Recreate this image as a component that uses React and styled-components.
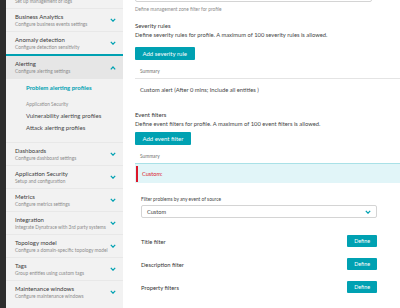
import React from 'react';
import styled, { createGlobalStyle } from 'styled-components';

const GlobalStyle = createGlobalStyle`
    html, body {
        margin: 0;
        padding: 0;
        background: #ffffff;
    }
    body {
        font-family: Lato, "Open Sans", sans-serif;
        color: #454646;
    }
`;

const teal = '#00a1b2';

const Screen = styled.div`
    display: flex;
    width: 400px;
    height: 308px;
    overflow: hidden;
`;

const Rail = styled.div`
    width: 6px;
    flex-shrink: 0;
    background: #2d2d2d;
`;

const Sidebar = styled.nav`
    width: 117px;
    flex-shrink: 0;
    background: #f2f2f2;
    overflow: hidden;
`;

const SideList = styled.div`
    display: flex;
    flex-direction: column;
    margin-top: -15px;
`;

const SideItem = styled.div`
    display: flex;
    align-items: center;
    justify-content: space-between;
    height: ${(p) => (p.active ? 25 : 23)}px;
    box-sizing: border-box;
    padding: 0 7px 0 9px;
    border-top: ${(p) => (p.active ? `2px solid ${teal}` : '1px solid #e8e8e8')};
    background: ${(p) => (p.active ? '#e6e6e6' : 'transparent')};
`;

const SideText = styled.div`
    display: flex;
    flex-direction: column;
`;

const SideTitle = styled.span`
    font-size: 6px;
    line-height: 8px;
    color: #3a3a3a;
`;

const SideSub = styled.span`
    font-size: 4.8px;
    line-height: 7px;
    color: #8c8c8c;
    white-space: nowrap;
`;

const SubMenu = styled.div`
    display: flex;
    flex-direction: column;
    padding: 3px 0 8px 20px;
    border-bottom: 1px solid #7fd0d9;
    margin-bottom: -1px;
`;

const SubLink = styled.span`
    font-size: 6px;
    line-height: 12px;
    font-weight: ${(p) => (p.current ? 700 : 400)};
    color: ${(p) => (p.current ? teal : '#454646')};
`;

const SubLabel = styled.span`
    font-size: 4.8px;
    line-height: 8px;
    color: #8c8c8c;
    margin: 6px 0 2px;
`;

const Chevron = ({ up }) => (
    <svg width="6" height="4" viewBox="0 0 6 4" style={{ flexShrink: 0 }}>
        <path
            d={up ? 'M0.8 3.4 L3 1 L5.2 3.4' : 'M0.8 0.8 L3 3.2 L5.2 0.8'}
            fill="none"
            stroke={teal}
            strokeWidth="1.2"
        />
    </svg>
);

const Main = styled.main`
    flex: 1;
    overflow: hidden;
    padding-left: 12px;
`;

const Content = styled.div`
    display: flex;
    flex-direction: column;
    margin-top: -14px;
`;

const ZoneBox = styled.div`
    width: 237px;
    height: 16px;
    box-sizing: border-box;
    border: 1px solid #d4d4d4;
    border-radius: 2px;
`;

const Hint = styled.div`
    font-size: 4.8px;
    line-height: 8px;
    color: #8c8c8c;
    margin-top: 3px;
`;

const Heading = styled.div`
    font-size: 6px;
    line-height: 9px;
    color: #353535;
    margin-top: ${(p) => p.gap}px;
`;

const Desc = styled.div`
    font-size: 5.8px;
    line-height: 9px;
    color: #454646;
`;

const Button = styled.button`
    align-self: flex-start;
    height: ${(p) => (p.small ? 12 : 13)}px;
    padding: 0 ${(p) => (p.small ? 7 : 7.5)}px;
    margin-top: ${(p) => p.gap || 0}px;
    border: none;
    border-radius: 1px;
    background: ${teal};
    color: #ffffff;
    font-family: Lato, "Open Sans", sans-serif;
    font-size: ${(p) => (p.small ? 5.4 : 6)}px;
    cursor: pointer;
`;

const TableHead = styled.div`
    font-size: 4.8px;
    line-height: 8px;
    color: #6f6f6f;
    padding: 0 0 ${(p) => p.pad || 0}px 5px;
    margin-top: 7px;
    border-bottom: ${(p) => (p.line ? '1px solid #e4e4e4' : 'none')};
`;

const TableRow = styled.div`
    font-size: 5.8px;
    line-height: 9px;
    color: #454646;
    padding: 6px 0 0 5px;
`;

const AlertBar = styled.div`
    display: flex;
    align-items: center;
    height: 20px;
    box-sizing: border-box;
    margin-top: 3px;
    border-top: 1.5px solid #a9e1e7;
    background: #e1f5f8;
`;

const AlertMark = styled.div`
    width: 2px;
    height: 16px;
    margin-left: 1px;
    background: #dc172a;
`;

const AlertText = styled.span`
    font-size: 5.6px;
    color: #dc172a;
    margin-left: 4px;
`;

const FieldLabel = styled.div`
    font-size: 4.8px;
    line-height: 8px;
    color: #454646;
    margin: 12px 0 2px 6px;
`;

const Select = styled.div`
    display: flex;
    align-items: center;
    justify-content: space-between;
    width: 236px;
    height: 13px;
    box-sizing: border-box;
    margin-left: 6px;
    padding: 0 5px;
    border: 1px solid #d4d4d4;
    border-radius: 2px;
    font-size: 5.6px;
    color: #454646;
`;

const FilterList = styled.div`
    display: flex;
    flex-direction: column;
    gap: 10px;
    width: 236px;
    margin: 17px 0 0 6px;
`;

const FilterRow = styled.div`
    display: flex;
    align-items: center;
    justify-content: space-between;
    height: 13px;
    font-size: 5.8px;
    color: #353535;
`;

const sideTop = [
    { title: 'Log Monitoring', sub: 'Set up management of logs' },
    { title: 'Business Analytics', sub: 'Configure business events settings' },
    { title: 'Anomaly detection', sub: 'Configure detection sensitivity' },
];

const sideBottom = [
    { title: 'Dashboards', sub: 'Configure dashboard settings' },
    { title: 'Application Security', sub: 'Setup and configuration' },
    { title: 'Metrics', sub: 'Configure metrics settings' },
    { title: 'Integration', sub: 'Integrate Dynatrace with 3rd party systems' },
    { title: 'Topology model', sub: 'Configure a domain-specific topology model' },
    { title: 'Tags', sub: 'Group entities using custom tags' },
    { title: 'Maintenance windows', sub: 'Configure maintenance windows' },
];

const SideEntry = ({ title, sub, active }) => (
    <SideItem active={active}>
        <SideText>
            <SideTitle>{title}</SideTitle>
            <SideSub>{sub}</SideSub>
        </SideText>
        <Chevron up={active} />
    </SideItem>
);

export default function App() {
    return (
        <>
            <GlobalStyle />
            <Screen>
                <Rail />
                <Sidebar>
                    <SideList>
                        {sideTop.map((item) => <SideEntry key={item.title} {...item} />)}
                        <SideEntry title="Alerting" sub="Configure alerting settings" active />
                        <SubMenu>
                            <SubLink current>Problem alerting profiles</SubLink>
                            <SubLabel>Application Security</SubLabel>
                            <SubLink>Vulnerability alerting profiles</SubLink>
                            <SubLink>Attack alerting profiles</SubLink>
                        </SubMenu>
                        {sideBottom.map((item) => <SideEntry key={item.title} {...item} />)}
                    </SideList>
                </Sidebar>
                <Main>
                    <Content>
                        <ZoneBox />
                        <Hint>Define management zone filter for profile</Hint>

                        <Heading gap={8}>Severity rules</Heading>
                        <Desc>Define severity rules for profile. A maximum of 100 severity rules is allowed.</Desc>
                        <Button gap={8}>Add severity rule</Button>
                        <TableHead line pad={3}>Summary</TableHead>
                        <TableRow>Custom alert (After 0 mins; Include all entities )</TableRow>

                        <Heading gap={16}>Event filters</Heading>
                        <Desc>Define event filters for profile. A maximum of 100 event filters is allowed.</Desc>
                        <Button gap={4}>Add event filter</Button>
                        <TableHead>Summary</TableHead>
                        <AlertBar>
                            <AlertMark />
                            <AlertText>Custom:</AlertText>
                        </AlertBar>

                        <FieldLabel>Filter problems by any event of source</FieldLabel>
                        <Select>
                            <span>Custom</span>
                            <Chevron />
                        </Select>

                        <FilterList>
                            {['Title filter', 'Description filter', 'Property filters'].map((name) => (
                                <FilterRow key={name}>
                                    <span>{name}</span>
                                    <Button small>Define</Button>
                                </FilterRow>
                            ))}
                        </FilterList>
                    </Content>
                </Main>
            </Screen>
        </>
    );
}
